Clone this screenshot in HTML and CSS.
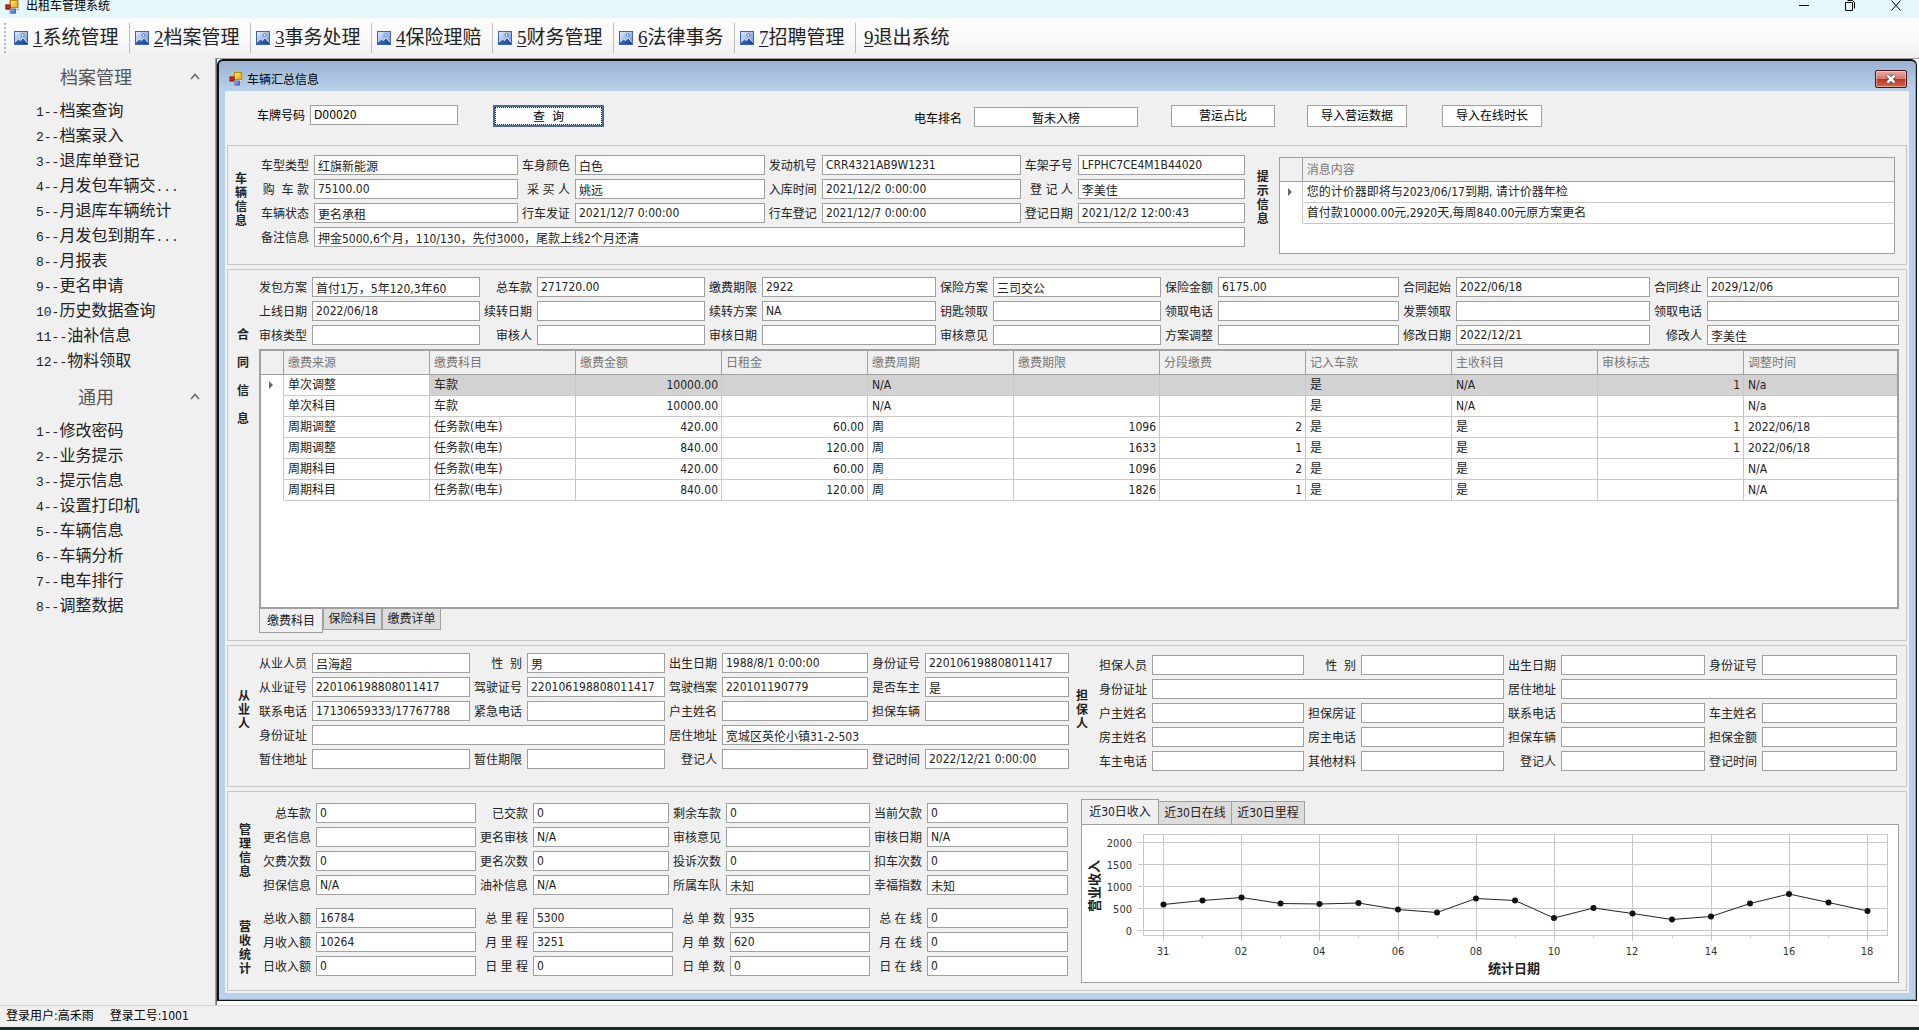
FILE: index.html
```html
<!DOCTYPE html>
<html lang="zh-CN">
<head>
<meta charset="utf-8">
<title>出租车管理系统</title>
<link rel="stylesheet" href="styles.css">
</head>
<body>
<svg class="defs" aria-hidden="true">
  <defs>
    <linearGradient id="blue" x1="0" y1="0" x2="1" y2="1"><stop offset="0" stop-color="#a9c8f5"/><stop offset="1" stop-color="#2b5cc0"/></linearGradient>
    <linearGradient id="gold" x1="0" y1="0" x2="1" y2="1"><stop offset="0" stop-color="#ffe680"/><stop offset="1" stop-color="#f0a800"/></linearGradient>
    <linearGradient id="sky" x1="0" y1="0" x2="1" y2="1"><stop offset="0" stop-color="#e6f0fd"/><stop offset="1" stop-color="#5c8add"/></linearGradient>
    <linearGradient id="hill" x1="0" y1="0" x2="1" y2="1"><stop offset="0" stop-color="#4f80d4"/><stop offset="1" stop-color="#173c8e"/></linearGradient>
    <symbol id="form" viewBox="0 0 14 14">
      <path d="M.5 4.500h4v-4h9v9h-3v4h-6v-4h-4z" fill="#e4e4e0" stroke="#b9b9b5"/>
      <rect x="5.500" y=".5" width="7" height="7" fill="url(#gold)" stroke="#b98a10"/>
      <rect x="1" y="5" width="4" height="4" fill="#d8281c" stroke="#8f120c"/>
      <rect x="6" y="9" width="4.500" height="4" fill="url(#blue)" stroke="#4670bb"/>
    </symbol>
    <symbol id="pic" viewBox="0 0 14 14">
      <rect x=".5" y=".5" width="13" height="13" fill="url(#sky)" stroke="#3d64ae"/>
      <path d="M1 11l3.500-3 2 1.500 2.500-3 4 5v1.500H1z" fill="url(#hill)"/>
      <path d="M1 11l3.500-3 2 1.500 2.500-3 4 5" fill="none" stroke="#fff" stroke-width=".8"/>
      <circle cx="8.500" cy="4" r="1.500" fill="#fff" stroke="#3d64ae" stroke-width=".8"/>
    </symbol>
    <symbol id="up" viewBox="0 0 10 7"><path d="M1 6l4-4.500L9 6" fill="none" stroke="#666" stroke-width="1.500"/></symbol>
  </defs>
</svg>

<header class="titlebar">
  <svg class="form-icon"><use href="#form"/></svg>
  <h1>出租车管理系统</h1>
  <div class="win-controls">
    <button aria-label="最小化"><svg viewBox="0 0 12 12"><path d="M1 5.500h10" stroke="#000"/></svg></button>
    <button aria-label="还原"><svg viewBox="0 0 12 12"><path d="M1.500 2.500h7v8h-7zM3.500 .5h5l2 2v6" fill="none" stroke="#000"/></svg></button>
    <button aria-label="关闭"><svg viewBox="0 0 12 12"><path d="M1.500 .5l9 10M10.500 .5l-9 10" stroke="#000"/></svg></button>
  </div>
</header>

<nav class="toolbar">
  <span class="grip"></span>
  <button><svg><use href="#pic"/></svg><span><u>1</u>系统管理</span></button>
  <button><svg><use href="#pic"/></svg><span><u>2</u>档案管理</span></button>
  <button><svg><use href="#pic"/></svg><span><u>3</u>事务处理</span></button>
  <button><svg><use href="#pic"/></svg><span><u>4</u>保险理赔</span></button>
  <button><svg><use href="#pic"/></svg><span><u>5</u>财务管理</span></button>
  <button><svg><use href="#pic"/></svg><span><u>6</u>法律事务</span></button>
  <button><svg><use href="#pic"/></svg><span><u>7</u>招聘管理</span></button>
  <button class="plain"><span><u>9</u>退出系统</span></button>
</nav>

<div class="workspace">
  <aside class="sidebar">
    <h2><span>档案管理</span><svg><use href="#up"/></svg></h2>
    <ul>
      <li><a href="#"><i>1--</i>档案查询</a></li>
      <li><a href="#"><i>2--</i>档案录入</a></li>
      <li><a href="#"><i>3--</i>退库单登记</a></li>
      <li><a href="#"><i>4--</i>月发包车辆交<i>...</i></a></li>
      <li><a href="#"><i>5--</i>月退库车辆统计</a></li>
      <li><a href="#"><i>6--</i>月发包到期车<i>...</i></a></li>
      <li><a href="#"><i>8--</i>月报表</a></li>
      <li><a href="#"><i>9--</i>更名申请</a></li>
      <li><a href="#"><i>10-</i>历史数据查询</a></li>
      <li><a href="#"><i>11--</i>油补信息</a></li>
      <li><a href="#"><i>12--</i>物料领取</a></li>
    </ul>
    <h2><span>通用</span><svg><use href="#up"/></svg></h2>
    <ul>
      <li><a href="#"><i>1--</i>修改密码</a></li>
      <li><a href="#"><i>2--</i>业务提示</a></li>
      <li><a href="#"><i>3--</i>提示信息</a></li>
      <li><a href="#"><i>4--</i>设置打印机</a></li>
      <li><a href="#"><i>5--</i>车辆信息</a></li>
      <li><a href="#"><i>6--</i>车辆分析</a></li>
      <li><a href="#"><i>7--</i>电车排行</a></li>
      <li><a href="#"><i>8--</i>调整数据</a></li>
    </ul>
  </aside>

  <main class="mdi">
    <section class="window">
      <header class="window-title">
        <svg class="form-icon"><use href="#form"/></svg>
        <h2>车辆汇总信息</h2>
        <button class="close" aria-label="关闭"><svg viewBox="0 0 12 10"><path d="M2.500 1.500l7 7M9.500 1.500l-7 7" stroke="#54343c" stroke-width="4"/><path d="M2.500 1.500l7 7M9.500 1.500l-7 7" stroke="#fff" stroke-width="2.500"/></svg></button>
      </header>

      <div class="client">
        <form class="query">
          <label for="plate">车牌号码</label>
          <input id="plate" class="plate" value="D00020">
          <button type="button" class="search">查  询</button>
          <label for="rank" class="rank-label">电车排名</label>
          <input id="rank" class="rank" value="暂未入榜" readonly>
          <button type="button" class="share">营运占比</button>
          <button type="button" class="import">导入营运数据</button>
          <button type="button" class="import last">导入在线时长</button>
        </form>

        <section class="panel vehicle">
          <h3>车辆信息</h3>
          <div class="fields">
            <label for="v1">车型类型</label><input id="v1" value="红旗新能源">
            <label for="v2">车身颜色</label><input id="v2" value="白色">
            <label for="v3">发动机号</label><input id="v3" value="CRR4321AB9W1231">
            <label for="v4">车架子号</label><input id="v4" value="LFPHC7CE4M1B44020">
            <label for="v5">购  车 款</label><input id="v5" value="75100.00">
            <label for="v6">采 买 人</label><input id="v6" value="姚远">
            <label for="v7">入库时间</label><input id="v7" value="2021/12/2 0:00:00">
            <label for="v8">登 记 人</label><input id="v8" value="李美佳">
            <label for="v9">车辆状态</label><input id="v9" value="更名承租">
            <label for="v10">行车发证</label><input id="v10" value="2021/12/7 0:00:00">
            <label for="v11">行车登记</label><input id="v11" value="2021/12/7 0:00:00">
            <label for="v12">登记日期</label><input id="v12" value="2021/12/2 12:00:43">
            <label for="v13">备注信息</label><input id="v13" class="span-all" value="押金5000,6个月，110/130，先付3000，尾款上线2个月还清">
          </div>
          <h3 class="tips">提示信息</h3>
          <div class="messages">
            <table>
              <colgroup><col class="mark"><col></colgroup>
              <thead><tr><th></th><th>消息内容</th></tr></thead>
              <tbody>
                <tr><td class="mark"><span class="arrow"></span></td><td>您的计价器即将与2023/06/17到期, 请计价器年检</td></tr>
                <tr><td class="mark"></td><td>首付款10000.00元,2920天,每周840.00元原方案更名</td></tr>
              </tbody>
            </table>
          </div>
        </section>

        <section class="panel contract">
          <h3>合同信息</h3>
          <div class="contract-body">
            <div class="fields">
              <label for="c1">发包方案</label><input id="c1" value="首付1万，5年120,3年60">
              <label for="c2">总车款</label><input id="c2" value="271720.00">
              <label for="c3">缴费期限</label><input id="c3" value="2922">
              <label for="c4">保险方案</label><input id="c4" value="三司交公">
              <label for="c5">保险金额</label><input id="c5" value="6175.00">
              <label for="c6">合同起始</label><input id="c6" value="2022/06/18">
              <label for="c7">合同终止</label><input id="c7" value="2029/12/06">
              <label for="c8">上线日期</label><input id="c8" value="2022/06/18">
              <label for="c9">续转日期</label><input id="c9">
              <label for="c10">续转方案</label><input id="c10" value="NA">
              <label for="c11">钥匙领取</label><input id="c11">
              <label for="c12">领取电话</label><input id="c12">
              <label for="c13">发票领取</label><input id="c13">
              <label for="c14">领取电话</label><input id="c14">
              <label for="c15">审核类型</label><input id="c15">
              <label for="c16">审核人</label><input id="c16">
              <label for="c17">审核日期</label><input id="c17">
              <label for="c18">审核意见</label><input id="c18">
              <label for="c19">方案调整</label><input id="c19">
              <label for="c20">修改日期</label><input id="c20" value="2022/12/21">
              <label for="c21">修改人</label><input id="c21" value="李美佳">
            </div>
            <div class="grid-box">
              <table>
                <colgroup><col class="mark"><col class="c"><col class="c"><col class="c"><col class="c"><col class="c"><col class="c"><col class="c"><col class="c"><col class="c"><col class="c"><col></colgroup>
                <thead><tr><th></th><th>缴费来源</th><th>缴费科目</th><th>缴费金额</th><th>日租金</th><th>缴费周期</th><th>缴费期限</th><th>分段缴费</th><th>记入车款</th><th>主收科目</th><th>审核标志</th><th>调整时间</th></tr></thead>
                <tbody>
                  <tr class="selected"><td class="mark"><span class="arrow"></span></td><td class="focus">单次调整</td><td>车款</td><td class="n">10000.00</td><td class="n"></td><td>N/A</td><td class="n"></td><td class="n"></td><td>是</td><td>N/A</td><td class="n">1</td><td>N/a</td></tr>
                  <tr><td class="mark"></td><td>单次科目</td><td>车款</td><td class="n">10000.00</td><td class="n"></td><td>N/A</td><td class="n"></td><td class="n"></td><td>是</td><td>N/A</td><td class="n"></td><td>N/a</td></tr>
                  <tr><td class="mark"></td><td>周期调整</td><td>任务款(电车)</td><td class="n">420.00</td><td class="n">60.00</td><td>周</td><td class="n">1096</td><td class="n">2</td><td>是</td><td>是</td><td class="n">1</td><td>2022/06/18</td></tr>
                  <tr><td class="mark"></td><td>周期调整</td><td>任务款(电车)</td><td class="n">840.00</td><td class="n">120.00</td><td>周</td><td class="n">1633</td><td class="n">1</td><td>是</td><td>是</td><td class="n">1</td><td>2022/06/18</td></tr>
                  <tr><td class="mark"></td><td>周期科目</td><td>任务款(电车)</td><td class="n">420.00</td><td class="n">60.00</td><td>周</td><td class="n">1096</td><td class="n">2</td><td>是</td><td>是</td><td class="n"></td><td>N/A</td></tr>
                  <tr><td class="mark"></td><td>周期科目</td><td>任务款(电车)</td><td class="n">840.00</td><td class="n">120.00</td><td>周</td><td class="n">1826</td><td class="n">1</td><td>是</td><td>是</td><td class="n"></td><td>N/A</td></tr>
                </tbody>
              </table>
            </div>
            <div class="tabs bottom">
              <button class="active">缴费科目</button><button>保险科目</button><button>缴费详单</button>
            </div>
          </div>
        </section>

        <section class="panel people">
          <h3>从业人</h3>
          <div class="fields driver">
            <label for="p1">从业人员</label><input id="p1" value="吕海超">
            <label for="p2">性  别</label><input id="p2" value="男">
            <label for="p3">出生日期</label><input id="p3" value="1988/8/1 0:00:00">
            <label for="p4">身份证号</label><input id="p4" value="220106198808011417">
            <label for="p5">从业证号</label><input id="p5" value="220106198808011417">
            <label for="p6">驾驶证号</label><input id="p6" value="220106198808011417">
            <label for="p7">驾驶档案</label><input id="p7" value="220101190779">
            <label for="p8">是否车主</label><input id="p8" value="是">
            <label for="p9">联系电话</label><input id="p9" value="17130659333/17767788">
            <label for="p10">紧急电话</label><input id="p10">
            <label for="p11">户主姓名</label><input id="p11">
            <label for="p12">担保车辆</label><input id="p12">
            <label for="p13">身份证址</label><input id="p13" class="wide">
            <label for="p14">居住地址</label><input id="p14" class="wide" value="宽城区英伦小镇31-2-503">
            <label for="p15">暂住地址</label><input id="p15">
            <label for="p16">暂住期限</label><input id="p16">
            <label for="p17">登记人</label><input id="p17">
            <label for="p18">登记时间</label><input id="p18" value="2022/12/21 0:00:00">
          </div>
          <h3 class="second">担保人</h3>
          <div class="fields guarantor">
            <label for="g1">担保人员</label><input id="g1">
            <label for="g2">性  别</label><input id="g2">
            <label for="g3">出生日期</label><input id="g3">
            <label for="g4">身份证号</label><input id="g4">
            <label for="g5">身份证址</label><input id="g5" class="wide">
            <label for="g6">居住地址</label><input id="g6" class="wide">
            <label for="g7">户主姓名</label><input id="g7">
            <label for="g8">担保房证</label><input id="g8">
            <label for="g9">联系电话</label><input id="g9">
            <label for="g10">车主姓名</label><input id="g10">
            <label for="g11">房主姓名</label><input id="g11">
            <label for="g12">房主电话</label><input id="g12">
            <label for="g13">担保车辆</label><input id="g13">
            <label for="g14">担保金额</label><input id="g14">
            <label for="g15">车主电话</label><input id="g15">
            <label for="g16">其他材料</label><input id="g16">
            <label for="g17">登记人</label><input id="g17">
            <label for="g18">登记时间</label><input id="g18">
          </div>
        </section>

        <section class="panel stats">
          <div class="stats-left">
            <div class="block">
              <h3>管理信息</h3>
              <div class="fields manage">
                <label for="m1">总车款</label><input id="m1" value="0">
                <label for="m2">已交款</label><input id="m2" value="0">
                <label for="m3">剩余车款</label><input id="m3" value="0">
                <label for="m4">当前欠款</label><input id="m4" value="0">
                <label for="m5">更名信息</label><input id="m5">
                <label for="m6">更名审核</label><input id="m6" value="N/A">
                <label for="m7">审核意见</label><input id="m7">
                <label for="m8">审核日期</label><input id="m8" value="N/A">
                <label for="m9">欠费次数</label><input id="m9" value="0">
                <label for="m10">更名次数</label><input id="m10" value="0">
                <label for="m11">投诉次数</label><input id="m11" value="0">
                <label for="m12">扣车次数</label><input id="m12" value="0">
                <label for="m13">担保信息</label><input id="m13" value="N/A">
                <label for="m14">油补信息</label><input id="m14" value="N/A">
                <label for="m15">所属车队</label><input id="m15" value="未知">
                <label for="m16">幸福指数</label><input id="m16" value="未知">
              </div>
            </div>
            <div class="block">
              <h3>营收统计</h3>
              <div class="fields revenue">
                <label for="r1">总收入额</label><input id="r1" value="16784">
                <label for="r2">总 里 程</label><input id="r2" value="5300">
                <label for="r3">总 单 数</label><input id="r3" value="935">
                <label for="r4">总 在 线</label><input id="r4" value="0">
                <label for="r5">月收入额</label><input id="r5" value="10264">
                <label for="r6">月 里 程</label><input id="r6" value="3251">
                <label for="r7">月 单 数</label><input id="r7" value="620">
                <label for="r8">月 在 线</label><input id="r8" value="0">
                <label for="r9">日收入额</label><input id="r9" value="0">
                <label for="r10">日 里 程</label><input id="r10" value="0">
                <label for="r11">日 单 数</label><input id="r11" value="0">
                <label for="r12">日 在 线</label><input id="r12" value="0">
              </div>
            </div>
          </div>
          <div class="charts">
            <div class="tabs top">
              <button class="active">近30日收入</button><button>近30日在线</button><button>近30日里程</button>
            </div>
            <div class="chart">
              <svg viewBox="0 0 816 157" role="img" aria-label="营业收入">
                <g stroke="#c8c8c8" fill="none" shape-rendering="crispEdges">
                  <rect x="61.500" y="9.500" width="744" height="101"/>
                  <path d="M56 17.500h750M56 39.500h750M56 61.500h750M56 83.500h750M56 105.500h750"/>
                  <path d="M81.500 10v106M159.500 10v106M237.500 10v106M316.500 10v106M394.500 10v106M472.500 10v106M550.500 10v106M629.500 10v106M707.500 10v106M785.500 10v106"/>
                  <path d="M120.500 110v3M198.500 110v3M276.500 110v3M355.500 110v3M433.500 110v3M511.500 110v3M590.500 110v3M668.500 110v3M746.500 110v3"/>
                </g>
                <path class="series" d="M81.500 79.500L120.500 75.500L159.500 72.500L198.500 78.500L237.500 79L276.500 78L316 84.500L355 87.500L394 73.500L433 75.500L472 93L511.500 83L550.500 88.500L590 94.500L629 91.500L668 78.500L707 69L746.500 77.500L785.500 86"/>
                <g class="axis end">
                  <text x="50" y="22">2000</text><text x="50" y="44">1500</text><text x="50" y="66">1000</text><text x="50" y="88">500</text><text x="50" y="110">0</text>
                </g>
                <g class="axis">
                  <text x="81" y="130">31</text><text x="159" y="130">02</text><text x="237" y="130">04</text><text x="316" y="130">06</text><text x="394" y="130">08</text><text x="472" y="130">10</text><text x="550" y="130">12</text><text x="629" y="130">14</text><text x="707" y="130">16</text><text x="785" y="130">18</text>
                </g>
                <text class="axis-title" x="432" y="148">统计日期</text>
                <text class="axis-title" transform="translate(17 61) rotate(-90)">营业收入</text>
                <g fill="#111"><circle cx="81.500" cy="79.500" r="3"/><circle cx="120.500" cy="75.500" r="3"/><circle cx="159.500" cy="72.500" r="3"/><circle cx="198.500" cy="78.500" r="3"/><circle cx="237.500" cy="79" r="3"/><circle cx="276.500" cy="78" r="3"/><circle cx="316" cy="84.500" r="3"/><circle cx="355" cy="87.500" r="3"/><circle cx="394" cy="73.500" r="3"/><circle cx="433" cy="75.500" r="3"/><circle cx="472" cy="93" r="3"/><circle cx="511.500" cy="83" r="3"/><circle cx="550.500" cy="88.500" r="3"/><circle cx="590" cy="94.500" r="3"/><circle cx="629" cy="91.500" r="3"/><circle cx="668" cy="78.500" r="3"/><circle cx="707" cy="69" r="3"/><circle cx="746.500" cy="77.500" r="3"/><circle cx="785.500" cy="86" r="3"/></g>
              </svg>
            </div>
          </div>
        </section>
      </div>
    </section>
  </main>
</div>

<footer class="status"><span>登录用户:高禾雨</span><span>登录工号:1001</span></footer>
</body>
</html>
```

FILE: styles.css
```css
* { box-sizing: border-box; }

:root {
  --line: #a0a0a0;
  --soft: #c8c8c8;
  --face: #f0f0f0;
  --ink: #222;
}

body {
  margin: 0;
  min-height: 100vh;
  display: flex;
  flex-direction: column;
  background: var(--face);
  color: var(--ink);
  font: 12px/20px "DejaVu Sans Condensed", "Noto Sans CJK SC", sans-serif;
}

h1, h2, h3, ul { margin: 0; padding: 0; font-size: 12px; font-weight: normal; }
ul { list-style: none; }
a { color: inherit; text-decoration: none; }
i { font-style: normal; }
button, input { font: inherit; color: inherit; border-radius: 0; }
button { white-space: pre; padding: 0; }
.defs { position: absolute; width: 0; height: 0; }

/* application title bar */
.titlebar {
  display: flex;
  height: 18px;
  padding-left: 5px;
  background: #e4f7fa;
  color: #000;
}
.form-icon { width: 14px; height: 14px; flex: none; }
.titlebar h1 { margin-left: 7px; line-height: 12px; }
.win-controls { margin-left: auto; display: flex; }
.win-controls button { width: 46px; height: 12px; border: 0; background: none; display: flex; justify-content: center; }
.win-controls svg { width: 12px; height: 12px; }

/* main menu */
.toolbar {
  display: flex;
  height: 40px;
  padding: 5px 0 5px 4px;
  background: linear-gradient(#fdfdfd, #f9f9f9 50%, #f0f0f0);
}
.grip { width: 5px; border-left: 2px dotted #b8b8b8; }
.toolbar button {
  width: 121px;
  border: 0;
  border-right: 1px solid #bdbdbd;
  background: none;
  padding-left: 5px;
  display: flex;
  align-items: center;
  gap: 5px;
  font: 19px/28px "Liberation Serif", "Noto Sans CJK SC", serif;
}
.toolbar svg { width: 14px; height: 14px; flex: none; }
.toolbar .plain { border: 0; padding-left: 8px; }
.toolbar u { text-underline-offset: 2px; }

.workspace { flex: 1; display: flex; }

/* navigation */
.sidebar { width: 216px; flex: none; border-right: 1px solid var(--line); }
.sidebar h2 {
  display: flex;
  align-items: center;
  height: 36px;
  margin-bottom: 3px;
  padding: 0 15px 0 2px;
  font: 18px/34px "Noto Sans CJK SC", sans-serif;
  color: #555;
}
.sidebar ul + h2 { margin-top: 6px; }
.sidebar h2 span { flex: 1; text-align: center; }
.sidebar h2 svg { width: 10px; height: 7px; }
.sidebar li { height: 25px; padding-left: 36px; font: 16px/25px "Noto Sans CJK SC", sans-serif; white-space: nowrap; }
.sidebar i { font: 13px/20px "Liberation Mono", monospace; }

/* child window */
.mdi { flex: 1; min-width: 0; display: flex; padding: 0 2px 4px 0; background: #fff; border-left: 1px solid #696969; border-top: 1px solid var(--line); }
.window {
  flex: 1;
  min-width: 0;
  display: flex;
  flex-direction: column;
  padding: 0 7px 7px 6px;
  border: solid #111;
  border-width: 2px 1px 1px 2px;
  border-radius: 6px 6px 0 0;
  background: linear-gradient(#9ab3d1, #b9d1ea 30px);
  box-shadow: inset -1px -1px 0 #35c5dc;
}
.window-title { display: flex; align-items: center; height: 30px; padding: 6px 2px 0 4px; color: #000; }
.window-title h2 { margin-left: 4px; line-height: 18px; padding-top: 2px; }
.close {
  margin: 0 0 0 auto;
  width: 32px;
  height: 18px;
  border: 1px solid #431422;
  border-radius: 2px;
  background: linear-gradient(#eba89c, #d9786a 48%, #b8341c 50%, #d06a4c);
  box-shadow: inset 0 0 0 1px rgba(255, 255, 255, .4);
  display: flex;
  align-items: center;
  justify-content: center;
}
.close svg { width: 12px; height: 10px; }
.client { flex: 1; background: var(--face); padding: 0 2px 2px; display: flex; flex-direction: column; gap: 4px; }

/* shared controls */
input { height: 20px; min-width: 0; width: 100%; padding: 0 3px; border: 1px solid var(--line); background: #fff; line-height: 18px; }
label { white-space: pre; text-align: right; padding: 2px 5px 0 0; line-height: 18px; }
.fields { display: grid; row-gap: 4px; align-content: start; min-width: 0; }

/* query row */
.query { display: flex; height: 50px; padding: 14px 12px 0 30px; color: #000; }
.query button { height: 22px; border: 1px solid var(--line); background: #fff; }
.query .plate { width: 148px; }
.query .search { width: 111px; margin-left: 35px; border: 2px solid #4a6a9c; outline: 1px dotted #222; outline-offset: -3px; }
.query .rank-label { margin-left: auto; padding: 4px 12px 0 0; line-height: 20px; }
.query .rank { width: 164px; margin-top: 2px; text-align: center; }
.query .share { width: 104px; margin-left: 33px; }
.query .import { width: 100px; margin-left: 32px; }
.query .last { margin-left: 35px; margin-right: 353px; }

/* panels */
.panel { display: flex; border: 1px solid var(--soft); }
h3 { flex: none; font-weight: bold; line-height: 14px; word-break: break-all; }

.vehicle { height: 120px; padding: 9px 11px 0 0; }
.vehicle h3 { width: 29px; padding: 17px 10px 0 7px; }
.vehicle .tips { width: 34px; padding: 15px 10px 0 12px; }
.vehicle .fields { flex: 989 1 0; grid-template-columns: 57px 204fr 57px 190fr 57px 199fr 57px 167fr; }
.span-all { grid-column: 2 / -1; }
.messages { flex: 615 1 0; height: 97px; margin-top: 2px; border: 1px solid var(--line); background: #fff; }

table { width: 100%; table-layout: fixed; border-collapse: separate; border-spacing: 0; }
col.mark { width: 23px; }
col.c { width: 146px; }
th { height: 24px; padding: 0 0 0 4px; text-align: left; font-weight: normal; color: #777; background: var(--face); border: solid var(--line); border-width: 0 1px 1px 0; line-height: 22px; }
td { height: 21px; padding: 0 3px 0 4px; line-height: 20px; border: solid var(--soft); border-width: 0 1px 1px 0; white-space: nowrap; background: #fff; }
th:last-child, td:last-child { border-right: 0; }
td.mark { border-bottom-color: #fff; padding: 0 0 0 8px; }
td.n { text-align: right; }
.selected td { background: #d2d2d2; }
.selected td.mark, .selected td.focus { background: #fff; }
.arrow { display: block; width: 0; border: solid transparent; border-width: 4px 0 4px 4px; border-left-color: #666; }

.contract { flex: 1; padding: 7px 7px 0 0; }
.contract h3 { width: 27px; padding: 44px 6px 0 9px; line-height: 28px; }
.contract-body { flex: 1; min-width: 0; display: flex; flex-direction: column; }
.contract .fields { grid-template-columns: 57px 168fr 57px 168fr 57px 174fr 57px 168fr 57px 181fr 57px 194fr 57px 192fr; }
.grid-box { flex: 1; min-height: 250px; margin: 4px 0 0 4px; border: 2px solid var(--line); background: #fff; }

.tabs { display: flex; }
.tabs button { border: 1px solid var(--line); background: #dcdcdc; line-height: 18px; }
.tabs .active { background: var(--face); }
.bottom { align-items: flex-start; height: 31px; margin-left: 4px; }
.bottom button { width: 59px; height: 21px; border-top: 0; }
.bottom .active { width: 64px; height: 24px; }

.people { height: 142px; padding: 7px 9px 0 0; }
.people h3 { width: 27px; padding: 36px 5px 0 10px; }
.people .second { width: 26px; padding: 36px 7px 0 7px; }
.driver { flex: 814 1 0; grid-template-columns: 57px 158fr 57px 138fr 57px 146fr 57px 144fr; }
.guarantor { flex: 802 1 0; padding-top: 2px; grid-template-columns: 57px 152fr 57px 143fr 57px 144fr 57px 135fr; }
.wide { grid-column: span 3; }

.stats { height: 200px; padding: 0 7px 0 0; }
.stats-left { flex: 840 1 0; display: flex; flex-direction: column; gap: 13px; padding-top: 11px; min-width: 0; }
.block { display: flex; }
.block h3 { width: 31px; padding: 20px 8px 0 11px; }
.block + .block h3 { padding-top: 12px; }
.block .fields { flex: 1; }
.manage { grid-template-columns: 57px 160fr 57px 136fr 57px 144fr 57px 141fr; }
.revenue { grid-template-columns: 57px 160fr 57px 140fr 57px 140fr 57px 141fr; }

.charts { flex: 818 1 0; min-width: 0; margin-left: 13px; padding-top: 7px; }
.top { align-items: flex-end; height: 25px; }
.top button { height: 23px; width: 73px; border-bottom: 0; border-left-width: 0; }
.top .active { height: 25px; width: 78px; border-left-width: 1px; }
.chart { border: 1px solid var(--line); background: #fff; }
.chart svg { display: block; width: 100%; }
.series { fill: none; stroke: #222; }
.axis { font-size: 11px; fill: #333; text-anchor: middle; }
.end { text-anchor: end; }
.axis-title { font-size: 13px; font-weight: bold; fill: var(--ink); text-anchor: middle; }

/* status bar */
.status { display: flex; gap: 16px; height: 25px; padding-left: 6px; border-top: 1px solid #d4d4d4; border-bottom: 3px solid #17302f; line-height: 21px; color: #000; }
```
